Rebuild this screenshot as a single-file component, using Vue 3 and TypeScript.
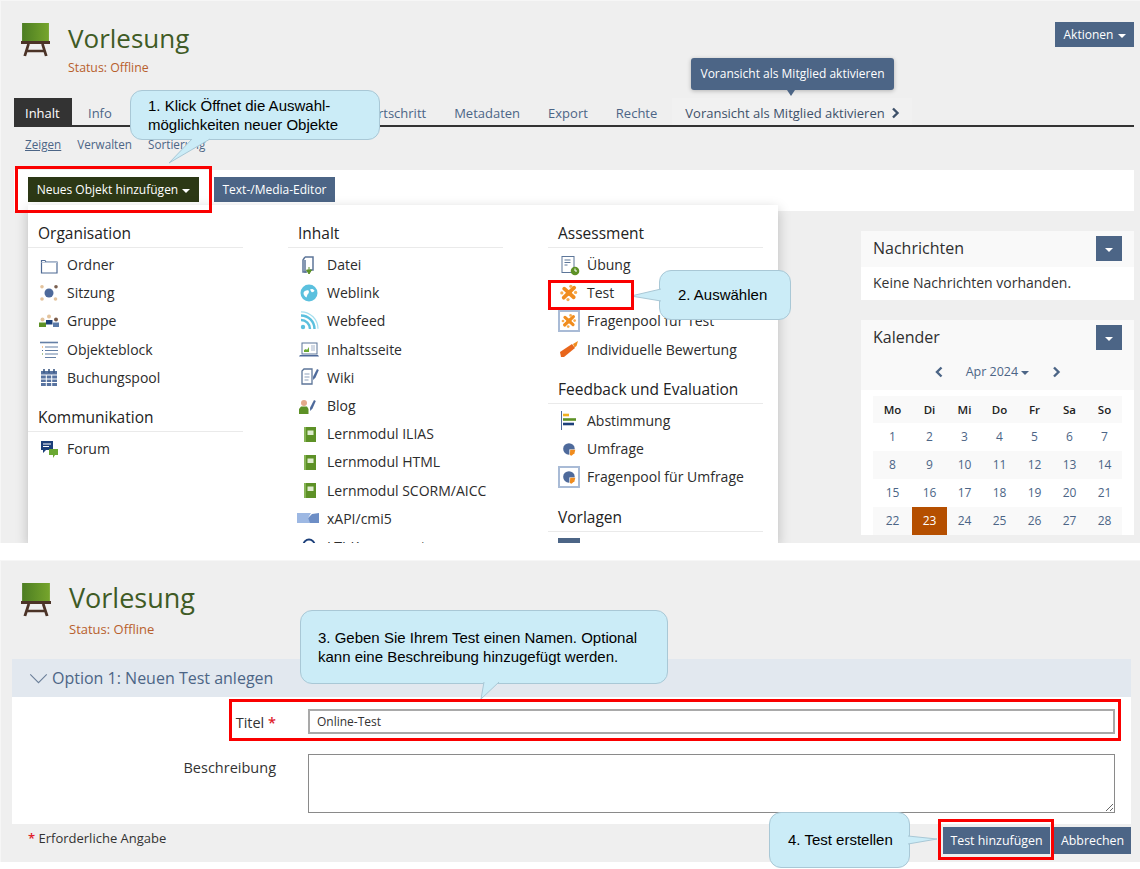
<script setup lang="ts">
const board = `<defs><linearGradient id="bg" x1="0" y1="0" x2="1" y2="0"><stop offset="0" stop-color="#4c7d22"/><stop offset="1" stop-color="#76a52c"/></linearGradient></defs><rect x="1" y="0" width="25" height="18" fill="url(#bg)"/><rect x="0" y="18" width="27" height="3" fill="#4b3327"/><path d="M7 21 3.500 33M20 21l3.500 12M5.500 28h16" stroke="#4b3327" stroke-width="2.600" fill="none"/>`

const puzzle = (s = 1, dx = 0, dy = 0) => `<g transform="translate(${dx} ${dy}) scale(${s})"><path d="M6 6.500 16 15.500M16.500 5.500 5.500 16" stroke="#f08c1e" stroke-width="4" stroke-linecap="round" fill="none"/><circle cx="11" cy="11" r="3" fill="#f08c1e"/><circle cx="13" cy="4" r="1.700" fill="#f7ab4d"/><circle cx="3.500" cy="11" r="1.700" fill="#f7ab4d"/><circle cx="18" cy="10.500" r="1.700" fill="#f7ab4d"/><circle cx="10" cy="18" r="1.700" fill="#f7ab4d"/></g>`
const pie = (s = 1, dx = 0, dy = 0) => `<g transform="translate(${dx} ${dy}) scale(${s})"><circle cx="11" cy="11" r="6.800" fill="#4e6a9b"/><path d="M11.500 11.500h7v7h-7z" fill="#fff"/><path d="M12.500 12h6l-1 4-3.500 3-2-1z" fill="#f08c1e"/></g>`
const pen = (x: number, y: number) => `<path d="M${x + 4} ${y}l1.800 1-3.300 7.500-2.300 2.500-.2-3.300z" fill="#4e6a9b"/>`

const icons: Record<string, string> = {
  ordner: `<path d="M3.500 6.500h3.500l1 1.500h11v11H3.500z" fill="#fff" stroke="#4f6a94" stroke-width="1.200"/><path d="M3.500 8.500h15.500" stroke="#b9c6d8"/>`,
  sitzung: `<circle cx="11" cy="11" r="4.500" fill="#4e6a9b"/><circle cx="4" cy="4.800" r="1.800" fill="#e3c39d"/><circle cx="18" cy="4.800" r="1.800" fill="#7a6050"/><circle cx="4" cy="17" r="1.800" fill="#e3c39d"/><circle cx="17.500" cy="17" r="1.800" fill="#e3c39d"/>`,
  gruppe: `<circle cx="4.500" cy="9.500" r="2" fill="#e3c39d"/><path d="M1 17v-4.500h7V17z" fill="#5d9126"/><circle cx="11" cy="6.500" r="2" fill="#e3c39d"/><path d="M8 14.500V10h6.500v4.500z" fill="#1c3f7a"/><circle cx="18" cy="9.500" r="2" fill="#7a5a48"/><path d="M15 17v-4.500h6V17z" fill="#5b7aa8"/>`,
  objektblock: `<path d="M2 4.500h18" stroke="#6580a6" stroke-width="1.600"/><path d="M7 9h13M7 12.500h13M7 16h13M7 19.500h11" stroke="#6580a6" stroke-width="1.200"/><path d="M4 9h1" stroke="#f08c1e"/><path d="M4 12.500h1" stroke="#4e6a9b"/><path d="M4 16h1" stroke="#5d9126"/>`,
  buchung: `<rect x="3" y="5" width="16" height="15" fill="#5873a0"/><path d="M6 3v4M11 3v4M16 3v4" stroke="#3e5a85" stroke-width="1.600"/><path d="M3 9h16M3 13h16M3 16.500h16M8.300 9v11M13.700 9v11" stroke="#fff"/>`,
  forum: `<path d="M3 3h12v9H8l-3 3v-3H3z" fill="#1c3f7a"/><path d="M5 6h8M5 8.500h6" stroke="#fff"/><path d="M11 11h9v6h-3l-2 3v-3h-4z" fill="#6aa832"/>`,
  datei: `<path d="M7 3h8v13h-3M9 18H7V6" fill="none" stroke="#5d7699" stroke-width="1.500"/><path d="M7 3 5 6v12h3" fill="none" stroke="#5d7699" stroke-width="1.500"/><path d="M11 13v4M8.500 16h5L11 20z" fill="#5d9126" stroke="#5d9126"/>`,
  weblink: `<circle cx="11" cy="11" r="8.500" fill="#5bc0de"/><path d="M5.500 11c.5-2 3-3 5-2.500 1 1.500 0 3-1 4l-1 3c-1.500-.5-3-2.500-3-4.500zM12 7.500c1.500-1 3.500-.5 4.500 1-.5 1.500-2 2-3 1.500z" fill="#fff"/>`,
  webfeed: `<circle cx="5" cy="17" r="2.200" fill="#5bc0de"/><path d="M3 10a9 9 0 0 1 9 9M3 5.500a13.500 13.500 0 0 1 13.500 13.500" fill="none" stroke="#5bc0de" stroke-width="2.400"/><path d="M3 1.800a17 17 0 0 1 17 17" fill="none" stroke="#a6dfee" stroke-width="1.200"/>`,
  seite: `<rect x="4" y="5" width="15" height="11" fill="#fff" stroke="#5d7699"/><path d="M6 14v-2l2-1 1 1 2-3v5z" fill="#6aa832"/><path d="M13 8h4M13 10h4M13 12h4" stroke="#a5b4c9"/><path d="M2 17h18l1 1.500H1z" fill="#4e6a9b"/>`,
  wiki: `<path d="M4 5l2-2h8v15H4z" fill="#fff" stroke="#5d7699" stroke-width="1.300"/><path d="M6.500 8h5M6.500 11h5M6.500 14h4" stroke="#8da0bb"/>${pen(15, 3)}`,
  blog: `<circle cx="6" cy="8" r="3" fill="#e3a98a"/><path d="M1 19v-5l2-2.500h6l1.500 2.500v5z" fill="#5d9126"/>${pen(12, 5)}`,
  lernmodul: `<rect x="6" y="4" width="12" height="15" fill="#5d9126"/><rect x="6" y="4" width="2" height="15" fill="#87b455"/><rect x="9.500" y="7.500" width="6" height="4.500" fill="#dfeccf"/>`,
  xapi: `<path d="M-1 6h14l-3 5 3 5H-1z" fill="#9db8e3"/><path d="M21 6v10H12l-2-5 4-4z" fill="#6d8ec6"/>`,
  lti: `<circle cx="11" cy="10" r="5.500" fill="none" stroke="#1c3f7a" stroke-width="2"/>`,
  uebung: `<rect x="4" y="2.500" width="12" height="16" fill="#fff" stroke="#5d7699"/><path d="M6.500 6h6M6.500 8.500h6M6.500 11h3" stroke="#5d7699"/><circle cx="17" cy="17" r="4.300" fill="#5d9126"/><path d="M17 14.500V17h2" stroke="#fff" fill="none"/>`,
  test: puzzle(0.95, 0.500, 0.500),
  fragenpool: `<rect x="0" y="0" width="22" height="22" fill="#a9bbd6"/><rect x="2" y="2" width="18" height="18" fill="#fff"/>${puzzle(0.8, 2.200, 2.200)}`,
  individuell: `<path d="M2 14 14 6l3 4-11 9H3z" fill="#e8661c"/><path d="M15 6l5-3-1.500 5-2 1.500z" fill="#f08c1e"/>`,
  abstimmung: `<path d="M3.500 2v19" stroke="#4e6a9b"/><path d="M5 6h6" stroke="#f0b020" stroke-width="2.600"/><path d="M5 10.500h13" stroke="#5d9126" stroke-width="2.600"/><path d="M5 15h11" stroke="#1c3f7a" stroke-width="2.600"/>`,
  umfrage: pie(0.85, 1.600, 1.600),
  fragenpoolu: `<rect x="0" y="0" width="22" height="22" fill="#a9bbd6"/><rect x="2" y="2" width="18" height="18" fill="#fff"/>${pie(0.85, 1.600, 1.600)}`,
  vorlage: `<rect x="0" y="1" width="22" height="21" fill="#4c6586"/>`,
}

type Item = { t: string; i: string }
type Group = { h: string; items: Item[] }
const columns: Group[][] = [
  [
    { h: 'Organisation', items: [
      { t: 'Ordner', i: 'ordner' }, { t: 'Sitzung', i: 'sitzung' }, { t: 'Gruppe', i: 'gruppe' },
      { t: 'Objekteblock', i: 'objektblock' }, { t: 'Buchungspool', i: 'buchung' }] },
    { h: 'Kommunikation', items: [{ t: 'Forum', i: 'forum' }] },
  ],
  [
    { h: 'Inhalt', items: [
      { t: 'Datei', i: 'datei' }, { t: 'Weblink', i: 'weblink' }, { t: 'Webfeed', i: 'webfeed' },
      { t: 'Inhaltsseite', i: 'seite' }, { t: 'Wiki', i: 'wiki' }, { t: 'Blog', i: 'blog' },
      { t: 'Lernmodul ILIAS', i: 'lernmodul' }, { t: 'Lernmodul HTML', i: 'lernmodul' },
      { t: 'Lernmodul SCORM/AICC', i: 'lernmodul' }, { t: 'xAPI/cmi5', i: 'xapi' }, { t: 'LTI-Konsument', i: 'lti' }] },
  ],
  [
    { h: 'Assessment', items: [
      { t: 'Übung', i: 'uebung' }, { t: 'Test', i: 'test' }, { t: 'Fragenpool für Test', i: 'fragenpool' },
      { t: 'Individuelle Bewertung', i: 'individuell' }] },
    { h: 'Feedback und Evaluation', items: [
      { t: 'Abstimmung', i: 'abstimmung' }, { t: 'Umfrage', i: 'umfrage' }, { t: 'Fragenpool für Umfrage', i: 'fragenpoolu' }] },
    { h: 'Vorlagen', items: [{ t: 'Portfoliovorlage', i: 'vorlage' }] },
  ],
]

const tabs = ['Info', 'Einstellungen', 'Mitglieder', 'Lernfortschritt', 'Metadaten', 'Export', 'Rechte']
const weekdays = ['Mo', 'Di', 'Mi', 'Do', 'Fr', 'Sa', 'So']
const weeks = [
  [1, 2, 3, 4, 5, 6, 7],
  [8, 9, 10, 11, 12, 13, 14],
  [15, 16, 17, 18, 19, 20, 21],
  [22, 23, 24, 25, 26, 27, 28],
]
</script>

<template>
  <div class="page">
    <section class="panel top">
      <header class="head">
        <svg class="board" viewBox="0 0 27 34" preserveAspectRatio="none" v-html="board"></svg>
        <div class="titles">
          <h1>Vorlesung</h1>
          <p class="status">Status: Offline</p>
        </div>
        <button class="btn actions">Aktionen <i class="caret"></i></button>
      </header>

      <nav class="tabs">
        <a class="tab active">Inhalt</a>
        <a v-for="t in tabs" :key="t" class="tab">{{ t }}</a>
        <a class="tab preview">Voransicht als Mitglied aktivieren
          <svg class="next" viewBox="0 0 9 12"><path d="M2 1.500 6.500 6 2 10.500" fill="none" stroke="#3d5069" stroke-width="2.400"/></svg>
        </a>
      </nav>

      <div class="subtabs">
        <a class="on">Zeigen</a><a>Verwalten</a><a>Sortierung</a>
      </div>

      <div class="toolbar">
        <button class="btn dark">Neues Objekt hinzufügen <i class="caret"></i></button>
        <button class="btn editor">Text-/Media-Editor</button>
      </div>

      <aside class="side">
        <div class="card">
          <div class="card-head">
            <h2>Nachrichten</h2>
            <button class="btn square"><i class="caret"></i></button>
          </div>
          <p class="card-body">Keine Nachrichten vorhanden.</p>
        </div>
        <div class="card">
          <div class="card-head tinted">
            <h2>Kalender</h2>
            <button class="btn square"><i class="caret"></i></button>
          </div>
          <div class="month">
            <svg class="mchev" viewBox="0 0 9 12"><path d="M6.500 1.500 2 6l4.500 4.500" fill="none" stroke="#4c6586" stroke-width="2.400"/></svg>
            <span class="mlabel">Apr 2024 <i class="caret blue"></i></span>
            <svg class="mchev" viewBox="0 0 9 12"><path d="M2 1.500 6.500 6 2 10.500" fill="none" stroke="#4c6586" stroke-width="2.400"/></svg>
          </div>
          <div class="cal">
            <div class="row headrow">
              <span v-for="d in weekdays" :key="d">{{ d }}</span>
            </div>
            <div v-for="(w, n) in weeks" :key="n" class="row" :class="{ odd: n % 2 === 1 }">
              <span v-for="d in w" :key="d" :class="{ today: d === 23 }">{{ d }}</span>
            </div>
          </div>
        </div>
      </aside>

      <div class="menu">
        <div v-for="(col, c) in columns" :key="c" class="menu-col">
          <div v-for="g in col" :key="g.h" class="menu-group">
            <h3>{{ g.h }}</h3>
            <div v-for="it in g.items" :key="it.t" class="menu-item">
              <svg class="ico" viewBox="0 0 22 22" v-html="icons[it.i]"></svg>
              <span>{{ it.t }}</span>
            </div>
          </div>
        </div>
      </div>

      <div class="tooltip">Voransicht als Mitglied aktivieren</div>
    </section>

    <section class="panel bottom">
      <header class="head2">
        <svg class="board b2" viewBox="0 0 27 34" preserveAspectRatio="none" v-html="board"></svg>
        <div class="titles t2">
          <h1>Vorlesung</h1>
          <p class="status">Status: Offline</p>
        </div>
      </header>
      <div class="sec-head">
        <svg class="sec-chev" viewBox="0 0 20 12"><path d="M1 1.500 10 10.500 19 1.500" fill="none" stroke="#6b7f99" stroke-width="1.200"/></svg>
        <span>Option 1: Neuen Test anlegen</span>
      </div>
      <form class="form">
        <label class="lab">Titel <b>*</b></label>
        <input class="field line" value="Online-Test" />
        <label class="lab">Beschreibung</label>
        <textarea class="field area"></textarea>
      </form>
      <footer class="foot">
        <span class="req"><b>*</b> Erforderliche Angabe</span>
        <div class="foot-btns">
          <button class="btn f1">Test hinzufügen</button>
          <button class="btn f2">Abbrechen</button>
        </div>
      </footer>
    </section>

    <div class="callout c1">1. Klick Öffnet die Auswahl-<br />möglichkeiten neuer Objekte
      <svg class="tail" style="left:37px;top:47px" width="50" height="30"><path d="M24 1 1 25 42 1" fill="#cbecf7" stroke="#a9c8d6"/><path d="M25 0h15v2H25z" fill="#cbecf7"/></svg>
    </div>
    <div class="callout c2">2. Auswählen
      <svg class="tail" style="left:-30px;top:12px" width="32" height="24"><path d="M31 6 1 13 31 18" fill="#cbecf7" stroke="#a9c8d6"/><path d="M30 7h2v10h-2z" fill="#cbecf7"/></svg>
    </div>
    <div class="callout c3">3. Geben Sie Ihrem Test einen Namen. Optional<br />kann eine Beschreibung hinzugefügt werden.
      <svg class="tail" style="left:178px;top:70px" width="24" height="20"><path d="M5 1 2 18 20 1" fill="#cbecf7" stroke="#a9c8d6"/><path d="M6 0h13v2H6z" fill="#cbecf7"/></svg>
    </div>
    <div class="callout c4">4. Test erstellen
      <svg class="tail" style="left:137px;top:20px" width="32" height="18"><path d="M1 3 30 6 1 11" fill="#cbecf7" stroke="#a9c8d6"/><path d="M0 4h2v6H0z" fill="#cbecf7"/></svg>
    </div>

    <div class="mark m1"></div>
    <div class="mark m2"></div>
    <div class="mark m3"></div>
    <div class="mark m4"></div>
  </div>
</template>

<style>
html, body { margin: 0; background: #fff; }
</style>

<style scoped>
.page {
  position: relative;
  width: 1140px;
  height: 869px;
  overflow: hidden;
  font-family: "Open Sans", sans-serif;
  background: #fff;
  color: #333;
}
h1, h2, h3, p { margin: 0; font-weight: 400; }
.panel { background: #efefef; box-sizing: border-box; box-shadow: inset 1px 1px 0 #f6f6f6; }
.top {
  position: relative;
  height: 543px;
  overflow: hidden;
  padding: 0 6px 0 14px;
  margin-bottom: 17px;
}
.head { display: flex; height: 98px; }
.board { width: 29px; height: 34px; flex: none; }
.head .board { margin: 23px 0 0 7px; }
.titles { margin: 19px 0 0 18px; }
.titles h1 { font-size: 26px; line-height: 38px; color: #3f5b25; }
.status { font-size: 12.300px; line-height: 18px; margin-top: 2px; color: #b8602c; }
.btn {
  border: 0;
  background: #4c6586;
  color: #fff;
  font: 500 12px "Open Sans", sans-serif;
  height: 25px;
  padding: 0 8px;
  white-space: nowrap;
}
.caret {
  display: inline-block;
  width: 0;
  height: 0;
  margin-left: 1px;
  vertical-align: middle;
  border: 4px solid transparent;
  border-top-color: #fff;
  border-bottom: 0;
}
.caret.blue { border-top-color: #4c6586; }
.actions { margin: 22px 0 0 auto; width: 79px; padding: 0; }

.tabs {
  display: flex;
  height: 27px;
  border-bottom: 2px solid #333;
}
.tab {
  padding: 0 14px;
  font-size: 13px;
  line-height: 30px;
  color: #4c6586;
  white-space: nowrap;
}
.tab.active { background: #333; color: #fff; width: 36px; padding: 0 11px; margin-right: 1px; }
.tab.active + .tab { margin-left: 1px; }
.tab.preview { background: #f1f1f1; color: #3d5069; padding: 0 12px 0 13px; margin-left: 1px; }
.next { width: 9px; height: 12px; margin-left: 3px; vertical-align: -1px; }

.subtabs {
  display: flex;
  gap: 16px;
  height: 43px;
  padding: 7px 0 0 11px;
  box-sizing: border-box;
  font-size: 11.700px;
  line-height: 20px;
  color: #4c6586;
}
.subtabs .on { text-decoration: underline; }

.toolbar {
  display: flex;
  gap: 15px;
  height: 41px;
  box-sizing: border-box;
  padding: 7px 14px 0;
  background: #fff;
}
.dark { background: #2c3815; width: 171px; padding: 0; }
.editor { width: 121px; padding: 0; }

.side {
  width: 273px;
  margin: 20px 0 0 847px;
}
.card { background: #fff; margin-bottom: 20px; }
.card-head {
  display: flex;
  justify-content: space-between;
  height: 36px;
  padding: 5px 12px 0;
  box-sizing: border-box;
  background: #f9f9f9;
}
.card-head h2 { font-size: 16px; line-height: 25px; color: #2f2f2f; }
.card-head.tinted { height: 37px; }
.square { width: 26px; padding: 0; }
.square .caret { margin: 0; }
.card-body { padding: 7px 12px 8px; font-size: 14px; line-height: 18px; }
.month {
  display: flex;
  justify-content: center;
  align-items: center;
  height: 33px;
  box-sizing: border-box;
  padding-bottom: 4px;
  background: #f9f9f9;
  color: #4c6586;
  font-size: 12.500px;
}
.mchev { width: 9px; height: 12px; }
.mlabel { width: 108px; text-align: center; }
.mlabel .caret { margin-left: 0; }
.cal { padding: 6px 12px 0; }
.row {
  display: grid;
  grid-template-columns: 39px repeat(6, 35px);
  height: 28px;
  font-size: 12px;
  line-height: 28px;
  text-align: center;
  color: #4c6586;
}
.row.headrow { height: 27px; line-height: 27px; background: #f9f9f9; color: #222; font-weight: 600; font-size: 11.500px; }
.row.odd { background: #f9f9f9; }
.today { background: #b54f00; color: #fff; }

.menu {
  position: absolute;
  left: 28px;
  top: 205px;
  display: flex;
  gap: 45px;
  width: 750px;
  height: 338px;
  box-sizing: border-box;
  padding-top: 15px;
  background: #fff;
  box-shadow: 0 4px 12px rgba(0, 0, 0, 0.22);
}
.menu-col { width: 215px; flex: none; }
.menu-group + .menu-group { margin-top: 12.600px; }
.menu-group h3 {
  height: 28px;
  box-sizing: border-box;
  padding-left: 10px;
  font-size: 15.500px;
  line-height: 26px;
  color: #222;
  border-bottom: 1.500px solid #eaeaea;
}
.menu-item {
  display: flex;
  align-items: center;
  height: 28.200px;
  padding-left: 10px;
  font-size: 14px;
  color: #2c2c2c;
}
.menu-group h3 + .menu-item { margin-top: 2.500px; }
.ico { width: 22px; height: 22px; flex: none; margin-right: 7px; overflow: visible; }

.tooltip {
  position: absolute;
  left: 691px;
  top: 58px;
  width: 203px;
  height: 32px;
  border-radius: 3px;
  background: #4c6586;
  color: #fff;
  font-size: 12px;
  font-weight: 500;
  line-height: 32px;
  text-align: center;
  box-shadow: 0 1px 4px rgba(0, 0, 0, 0.25);
}
.tooltip::after {
  content: "";
  position: absolute;
  left: 96px;
  top: 32px;
  border: 4px solid transparent;
  border-top: 6px solid #4c6586;
  border-bottom: 0;
}

.bottom { height: 302px; padding: 0 9px 0 12px; }
.head2 { display: flex; height: 99px; }
.head2 .board { margin: 23px 0 0 9px; width: 30px; height: 34px; }
.t2 { margin: 19px 0 0 18px; }
.t2 h1 { font-size: 27px; }
.t2 .status { margin-top: 3px; font-size: 13px; }
.sec-head {
  display: flex;
  align-items: center;
  height: 38px;
  padding-left: 17px;
  background: #e2e8ef;
  color: #4c6586;
  font-size: 16px;
  font-weight: 500;
}
.sec-chev { width: 19px; height: 11px; margin-right: 4px; }
.form {
  display: grid;
  grid-template-columns: 264px 807px;
  grid-template-rows: 25px 59px;
  column-gap: 32px;
  row-gap: 20px;
  padding: 12px 0 11px;
  background: #fff;
}
.lab {
  text-align: right;
  font-size: 14.500px;
  line-height: 28px;
  color: #333;
}
.lab b { color: #e0202a; font-weight: 600; }
.field {
  box-sizing: border-box;
  width: 807px;
  height: 25px;
  margin: 0;
  padding: 0 8px;
  border: 1px solid #8a8a8a;
  border-radius: 0;
  font: 12px "Open Sans", sans-serif;
  color: #333;
  background: #fff;
  outline: none;
}
.line { border: 2px solid #a9a9a9; padding: 0 7px; }
.area { height: 59px; display: block; }
.foot {
  display: flex;
  justify-content: space-between;
  height: 37px;
  padding-left: 16px;
  font-size: 13px;
}
.req { line-height: 28px; }
.req b { color: #e0202a; font-weight: 600; }
.foot-btns { display: flex; gap: 4px; margin-top: 3px; }
.f1 { width: 107px; height: 27px; padding: 0; font-size: 12.400px; }
.f2 { width: 77px; height: 27px; padding: 0; font-size: 12.400px; }

.callout {
  position: absolute;
  box-sizing: border-box;
  border: 1px solid #a9c8d6;
  border-radius: 12px;
  background: #cbecf7;
  color: #000;
  font-family: "Liberation Sans", Arial, sans-serif;
  font-size: 15px;
  line-height: 18.500px;
}
.tail { position: absolute; overflow: visible; }
.c1 { left: 130px; top: 90px; width: 250px; height: 50px; padding: 6px 0 0 17px; }
.c2 { left: 659px; top: 270px; width: 132px; height: 50px; padding: 15px 0 0 18px; }
.c3 { left: 300px; top: 610px; width: 368px; height: 74px; padding: 18px 0 0 17px; }
.c4 { left: 769px; top: 812px; width: 141px; height: 56px; padding: 18px 0 0 18px; }
.mark { position: absolute; box-sizing: border-box; border: 3px solid #fa0000; }
.m1 { left: 15px; top: 166px; width: 197px; height: 47px; }
.m2 { left: 548px; top: 280px; width: 86px; height: 30px; }
.m3 { left: 229px; top: 699px; width: 892px; height: 42px; }
.m4 { left: 938px; top: 819px; width: 116px; height: 41px; }
</style>
